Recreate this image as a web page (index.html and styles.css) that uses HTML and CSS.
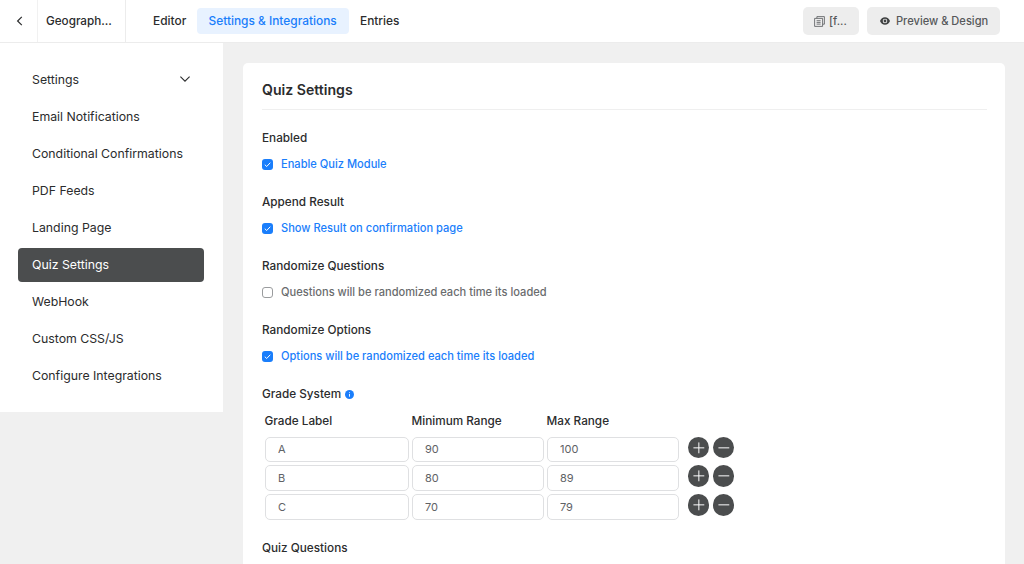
FILE: index.html
```html
<!DOCTYPE html>
<html lang="en">
<head>
	<meta charset="UTF-8">
	<title>Quiz Settings</title>
	<link rel="stylesheet" href="styles.css">
</head>
<body>
	<header class="topbar">
		<a class="back" title="Back">
			<svg width="8" height="12" viewBox="0 0 8 12"><path d="M5.8 1.8 L1.6 6 L5.8 10.2"/></svg>
		</a>
		<div class="form-name">Geograph...</div>
		<nav class="tabs">
			<a class="tab tab-editor">Editor</a>
			<a class="tab tab-settings active">Settings &amp; Integrations</a>
			<a class="tab tab-entries">Entries</a>
		</nav>
		<div class="actions">
			<button class="btn btn-code">
				<svg width="11" height="11" viewBox="0 0 11 11"><path d="M2.9 2.2 V.6 H10.4 V8.2 H8.7 M.6 2.4 H8.6 V10.4 H.6 Z M2.6 4.7 H6.6 M2.6 6.4 H6.6 M2.6 8.1 H6.6"/></svg>
				<span>[f...</span>
			</button>
			<button class="btn btn-preview">
				<svg width="10" height="8" viewBox="0 0 10 8"><path class="eye" fill-rule="evenodd" d="M5 .3 C7.4 .3 9.1 1.8 10 4 C9.1 6.2 7.4 7.7 5 7.7 C2.6 7.7 .9 6.2 0 4 C.9 1.8 2.6 .3 5 .3 Z M5 1.7 A2.3 2.3 0 1 0 5 6.3 A2.3 2.3 0 1 0 5 1.7 Z"/><circle class="eye" cx="5" cy="4" r="1.4"/></svg>
				<span>Preview &amp; Design</span>
			</button>
		</div>
	</header>

	<div class="content">
		<aside class="sidebar">
			<a class="side-item"><span>Settings</span>
				<svg width="12" height="8" viewBox="0 0 12 8"><path d="M1.4 1.6 L6 6.2 L10.6 1.6"/></svg>
			</a>
			<a class="side-item"><span>Email Notifications</span></a>
			<a class="side-item"><span>Conditional Confirmations</span></a>
			<a class="side-item"><span>PDF Feeds</span></a>
			<a class="side-item"><span>Landing Page</span></a>
			<a class="side-item active"><span>Quiz Settings</span></a>
			<a class="side-item"><span>WebHook</span></a>
			<a class="side-item"><span>Custom CSS/JS</span></a>
			<a class="side-item"><span>Configure Integrations</span></a>
		</aside>

		<main class="panel">
			<h1 class="panel-title">Quiz Settings</h1>

			<section class="field">
				<h2 class="label">Enabled</h2>
				<div class="check checked">
					<span class="box"><svg width="11" height="11" viewBox="0 0 11 11"><path d="M2.8 5.7 L4.7 7.5 L8.3 3.7"/></svg></span>
					<span>Enable Quiz Module</span>
				</div>
			</section>
			<section class="field">
				<h2 class="label">Append Result</h2>
				<div class="check checked">
					<span class="box"><svg width="11" height="11" viewBox="0 0 11 11"><path d="M2.8 5.7 L4.7 7.5 L8.3 3.7"/></svg></span>
					<span>Show Result on confirmation page</span>
				</div>
			</section>
			<section class="field">
				<h2 class="label">Randomize Questions</h2>
				<div class="check">
					<span class="box"></span>
					<span>Questions will be randomized each time its loaded</span>
				</div>
			</section>
			<section class="field">
				<h2 class="label">Randomize Options</h2>
				<div class="check checked">
					<span class="box"><svg width="11" height="11" viewBox="0 0 11 11"><path d="M2.8 5.7 L4.7 7.5 L8.3 3.7"/></svg></span>
					<span>Options will be randomized each time its loaded</span>
				</div>
			</section>

			<section class="grades">
				<h2 class="label">Grade System
					<svg class="info" width="9" height="9" viewBox="0 0 9 9"><circle cx="4.5" cy="4.5" r="4.5"/><path d="M4.5 2.3 V3.1 M4.5 4 V6.7"/></svg>
				</h2>
				<div class="grade-row grade-head">
					<span>Grade Label</span>
					<span>Minimum Range</span>
					<span>Max Range</span>
				</div>
				<div class="grade-row">
					<input type="text" value="A">
					<input type="text" value="90">
					<input type="text" value="100">
					<div class="row-btns">
						<button class="round"><svg viewBox="0 0 22 22"><path d="M5.5 11 H16.5 M11 5.5 V16.5"/></svg></button>
						<button class="round"><svg viewBox="0 0 22 22"><path d="M5.5 11 H16.5"/></svg></button>
					</div>
				</div>
				<div class="grade-row">
					<input type="text" value="B">
					<input type="text" value="80">
					<input type="text" value="89">
					<div class="row-btns">
						<button class="round"><svg viewBox="0 0 22 22"><path d="M5.5 11 H16.5 M11 5.5 V16.5"/></svg></button>
						<button class="round"><svg viewBox="0 0 22 22"><path d="M5.5 11 H16.5"/></svg></button>
					</div>
				</div>
				<div class="grade-row">
					<input type="text" value="C">
					<input type="text" value="70">
					<input type="text" value="79">
					<div class="row-btns">
						<button class="round"><svg viewBox="0 0 22 22"><path d="M5.5 11 H16.5 M11 5.5 V16.5"/></svg></button>
						<button class="round"><svg viewBox="0 0 22 22"><path d="M5.5 11 H16.5"/></svg></button>
					</div>
				</div>
			</section>

			<h2 class="label">Quiz Questions</h2>
		</main>
	</div>
</body>
</html>
```
FILE: styles.css
```css
* {
	box-sizing: border-box;
}

body {
	margin: 0;
	height: 564px;
	overflow: hidden;
	background: #f0f0f0;
	color: #2b2c2d;
	font-family: Inter, "Liberation Sans", sans-serif;
}

svg {
	display: block;
	flex: none;
	fill: none;
	stroke: currentColor;
}

button, input {
	font-family: inherit;
	margin: 0;
}

/* top bar */
.topbar {
	display: flex;
	align-items: center;
	height: 43px;
	background: #fff;
	border-bottom: 1px solid #ececec;
}

.back {
	display: flex;
	align-items: center;
	justify-content: center;
	width: 38px;
	height: 42px;
	padding-left: 3px;
	border-right: 1px solid #f1f1f1;
}

.back svg {
	stroke-width: 1.2;
}

.form-name {
	width: 88px;
	height: 42px;
	padding-left: 8px;
	line-height: 42px;
	font-size: 11.7px;
	font-weight: 500;
	border-right: 1px solid #ececec;
}

.tabs {
	display: flex;
	margin-left: 16px;
}

.tab {
	height: 26px;
	padding: 0 11px;
	line-height: 26px;
	font-size: 11.9px;
	font-weight: 500;
	border-radius: 4px;
	white-space: nowrap;
}

.tab-editor {
	width: 55px;
}

.tab-settings {
	width: 152px;
	padding-left: 11.5px;
}

.tab.active {
	color: #1a7efb;
	background: #e8f2ff;
}

.actions {
	display: flex;
	gap: 8px;
	margin-left: auto;
	margin-right: 24px;
}

.btn {
	display: flex;
	align-items: center;
	height: 28px;
	padding: 0;
	border: 0;
	border-radius: 5px;
	background: #ededed;
	color: #56585a;
	font-size: 11.1px;
	font-weight: 500;
	white-space: nowrap;
}

.btn-code {
	width: 56px;
	padding-left: 11px;
	gap: 4px;
}

.btn-code svg {
	stroke-width: .8;
}

.btn-preview {
	width: 133px;
	padding-left: 13px;
	gap: 6px;
}

.eye {
	fill: #3f4142;
	stroke: none;
}

/* side menu */
.content {
	display: flex;
	align-items: flex-start;
}

.sidebar {
	display: flex;
	flex-direction: column;
	gap: 3px;
	width: 223px;
	height: 369px;
	padding: 19.5px 19.5px 0 17.5px;
	background: #fff;
}

.side-item {
	display: flex;
	align-items: center;
	justify-content: space-between;
	height: 34px;
	padding: 0 13px 1px 14.5px;
	font-size: 12.3px;
	border-radius: 4px;
}

.side-item svg {
	stroke-width: 1.1;
}

.side-item.active {
	background: #4b4d4e;
	color: #fff;
}

/* settings panel */
.panel {
	width: 762px;
	height: 520px;
	margin: 20px 0 0 20px;
	padding: 0 18px 0 19px;
	background: #fff;
	border-radius: 5px 5px 0 0;
}

.panel-title {
	margin: 0 0 18px;
	height: 47px;
	line-height: 54px;
	font-size: 14.1px;
	font-weight: 600;
	border-bottom: 1px solid #efefef;
}

.label {
	display: flex;
	align-items: center;
	gap: 4px;
	height: 20px;
	margin: 0;
	font-size: 11.75px;
	font-weight: 500;
}

.field {
	height: 64px;
}

.check {
	display: flex;
	align-items: center;
	gap: 8px;
	height: 20px;
	margin-top: 6px;
	font-size: 11.1px;
	font-weight: 500;
	color: #6a6c6e;
}

.check.checked {
	color: #1a7efb;
}

.box {
	width: 11px;
	height: 11px;
	border: 1px solid #9a9c9e;
	border-radius: 3px;
}

.checked .box {
	border: 0;
	background: #1a7efb;
	color: #fff;
}

.info circle {
	fill: #1a7efb;
	stroke: none;
}

.info path {
	stroke: #fff;
	stroke-width: .9;
}

/* grade table */
.grades {
	height: 154px;
}

.grade-row {
	display: grid;
	grid-template-columns: 144px 132px 132px auto;
	column-gap: 3px;
	justify-content: start;
	padding-left: 3px;
	margin-bottom: 3.4px;
}

.grade-head {
	height: 32.7px;
	margin-bottom: 0;
	padding-left: 2.5px;
	line-height: 35px;
	font-size: 11.75px;
	font-weight: 500;
}

.grade-row input {
	width: 100%;
	height: 25.4px;
	padding: 0 12px;
	border: 1px solid #dfe0e2;
	border-radius: 5px;
	background: #fff;
	color: #606266;
	font-size: 11px;
}

.row-btns {
	display: flex;
	gap: 3.3px;
	padding-left: 5.7px;
}

.round {
	width: 21.7px;
	height: 21.7px;
	padding: 0;
	border: 0;
	border-radius: 50%;
	background: #4b4d4e;
	color: #fff;
}
```
